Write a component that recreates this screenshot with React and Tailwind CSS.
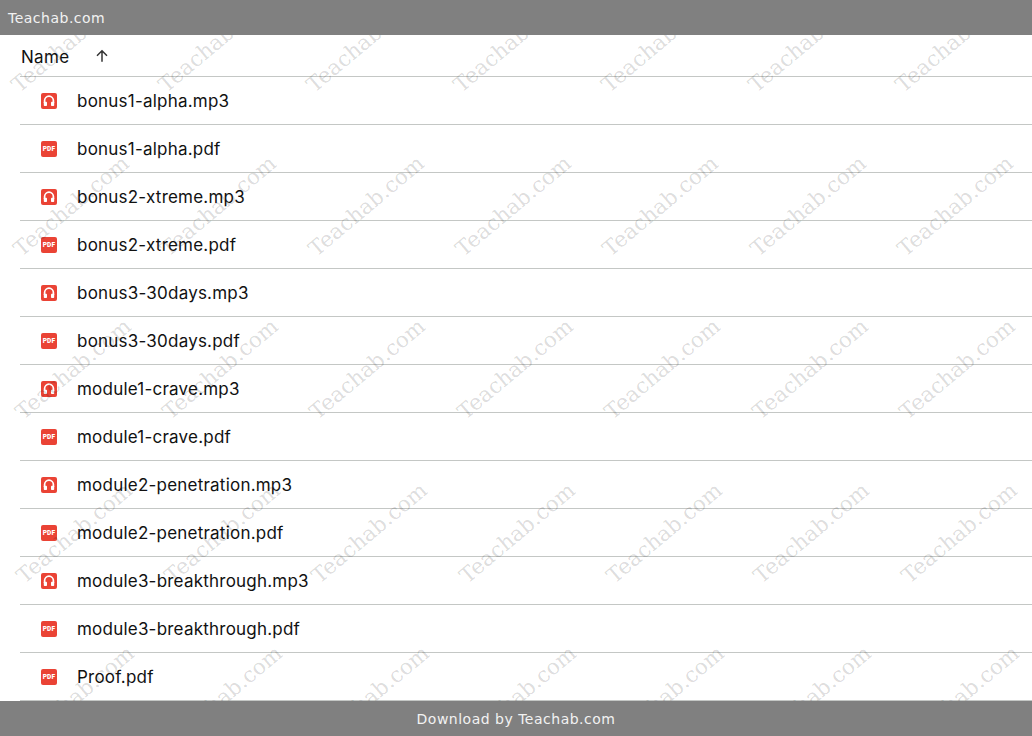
const files = [
  "bonus1-alpha.mp3",
  "bonus1-alpha.pdf",
  "bonus2-xtreme.mp3",
  "bonus2-xtreme.pdf",
  "bonus3-30days.mp3",
  "bonus3-30days.pdf",
  "module1-crave.mp3",
  "module1-crave.pdf",
  "module2-penetration.mp3",
  "module2-penetration.pdf",
  "module3-breakthrough.mp3",
  "module3-breakthrough.pdf",
  "Proof.pdf",
];

const AudioIcon = () => (
  <svg width="16" height="16" viewBox="0 0 16 16" className="shrink-0">
    <rect width="16" height="16" rx="2" fill="#ea4335" />
    <path d="M3.6 10V7.6a4.4 4.4 0 0 1 8.8 0V10" fill="none" stroke="#fff" strokeWidth="1.7" />
    <rect x="2.8" y="8.8" width="3.2" height="4.2" rx="0.8" fill="#fff" />
    <rect x="10" y="8.8" width="3.2" height="4.2" rx="0.8" fill="#fff" />
  </svg>
);

const PdfIcon = () => (
  <svg width="16" height="16" viewBox="0 0 16 16" className="shrink-0">
    <rect width="16" height="16" rx="2" fill="#ea4335" />
    <text x="8" y="10.2" textAnchor="middle" fill="#fff" fontSize="6.5" fontWeight="900" letterSpacing="0.2" fontFamily="Roboto, sans-serif">
      PDF
    </text>
  </svg>
);

const Watermarks = () => {
  const marks = [];
  for (let r = 0; r < 5; r++) {
    for (let c = -1; c < 7; c++) {
      marks.push({ key: `${r}-${c}`, left: 23 + r * 1.8 + c * 147.4, top: 37 + r * 163.6 });
    }
  }
  return (
    <div className="absolute inset-0 overflow-hidden pointer-events-none">
      {marks.map((m) => (
        <span
          key={m.key}
          className="absolute whitespace-nowrap origin-bottom-left -rotate-[40deg] text-[21.5px] leading-[26px] text-black/15 font-['DejaVu_Serif',serif]"
          style={{ left: m.left, top: m.top }}
        >
          Teachab.com
        </span>
      ))}
    </div>
  );
};

export default function App() {
  return (
    <div className="flex flex-col h-screen overflow-hidden bg-white font-['Inter',sans-serif]">
      <header className="h-[35px] shrink-0 flex items-center px-2 bg-[#808080] text-[#f2f2f2] text-sm tracking-[0.5px] font-['DejaVu_Sans',sans-serif]">
        Teachab.com
      </header>

      <main className="relative flex-1 overflow-hidden">
        <div className="h-[42px] ml-5 pl-px flex items-center border-b border-[#c4c7c5] text-[#111] text-[17px] tracking-[0.3px]">
          <span className="mt-1">Name</span>
          <svg width="16" height="16" viewBox="0 0 16 16" className="ml-[25px]">
            <path d="M8 13.8V2.8M3 7.8 8 2.8l5 5" fill="none" stroke="#333" strokeWidth="1.5" />
          </svg>
        </div>
        {files.map((name) => (
          <div key={name} className="h-12 ml-5 pl-[21px] flex items-center gap-5 border-b border-[#c4c7c5]">
            {name.endsWith(".mp3") ? <AudioIcon /> : <PdfIcon />}
            <span className="mt-0.5 text-[#111] text-[17px] tracking-[0.22px]">{name}</span>
          </div>
        ))}
        <Watermarks />
      </main>

      <footer className="h-[35px] shrink-0 flex items-center justify-center bg-[#808080] text-[#f2f2f2] text-sm tracking-[0.5px] font-['DejaVu_Sans',sans-serif]">
        Download by Teachab.com
      </footer>
    </div>
  );
}
